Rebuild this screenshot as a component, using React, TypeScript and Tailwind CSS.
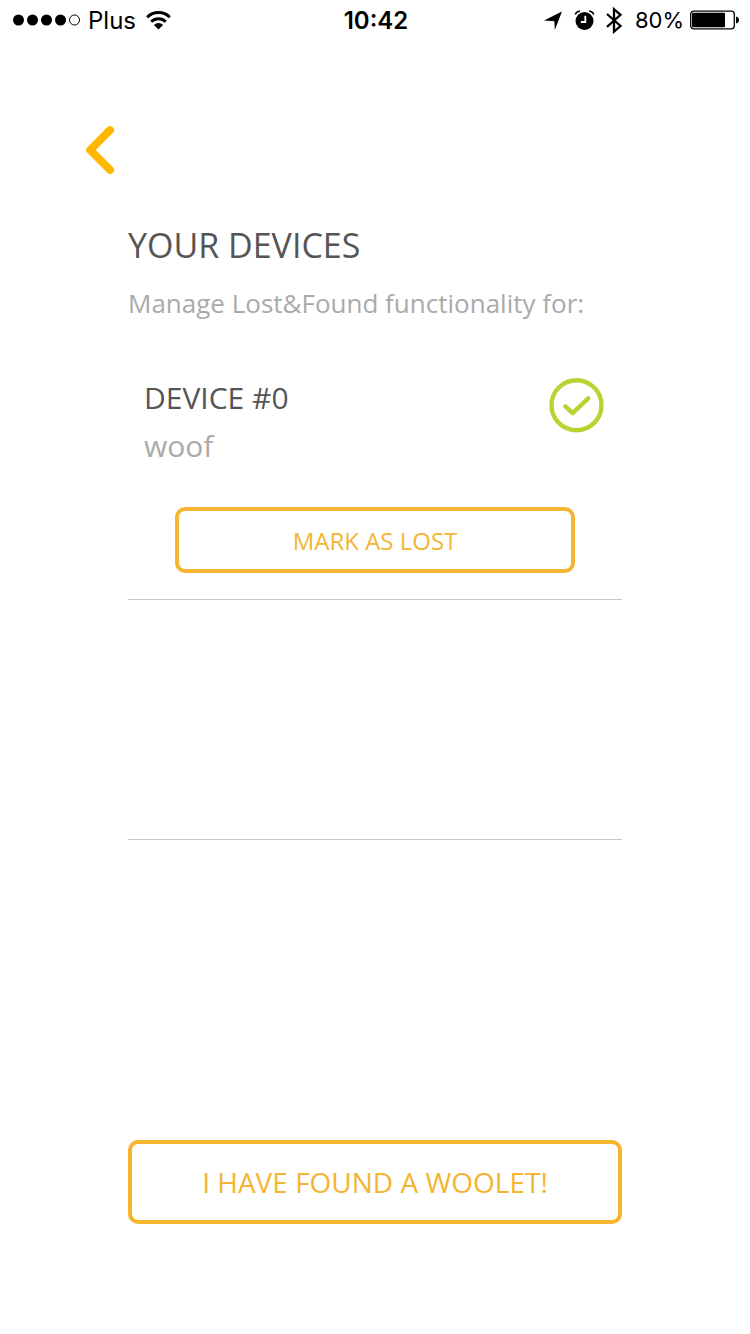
import { useState } from 'react';

const SIGNAL = [5.5, 19.5, 33.5, 47.5];
const DEVICES = [{ id: 0, name: 'woof' }];

function StatusBar() {
  return (
    <div className="grid grid-cols-[1fr_auto_1fr] items-center h-10 pl-[13px] pr-[11px] font-['Inter',sans-serif] text-2xl text-black">
      <div className="flex items-center">
        <svg width="68" height="12" viewBox="0 0 68 12" aria-label="Signal">
          {SIGNAL.map(cx => <circle key={cx} cx={cx} cy="6" r="5.5" />)}
          <circle cx="61.5" cy="6" r="5" fill="none" stroke="#000" />
        </svg>
        <span className="ml-[7px] pt-0.5">Plus</span>
        <svg className="ml-2.5" width="25" height="20" viewBox="0 0 25 20" fill="none" stroke="#000" strokeWidth="3" aria-label="Wi-Fi">
          <path d="M1.2 7.2a16 16 0 0 1 22.6 0" />
          <path d="M5.2 11.8a10.4 10.4 0 0 1 14.6 0" />
          <path d="M12.5 19.4 7.9 15a6.5 6.5 0 0 1 9.2 0z" fill="#000" stroke="none" />
        </svg>
      </div>

      <span className="pt-0.5 font-semibold">10:42</span>

      <div className="flex items-center justify-end">
        <svg width="18" height="20" viewBox="0 0 18 20" aria-label="Location">
          <path d="M18 1.6 10.8 20 10.4 11.2 0 10.6z" />
        </svg>
        <svg className="ml-3" width="21" height="20" viewBox="0 0 21 20" aria-label="Alarm">
          <circle cx="10.5" cy="11" r="9" />
          <path d="M1.2 4.6Q2.3 1.6 6 1.1M19.8 4.6Q18.7 1.6 15 1.1" fill="none" stroke="#000" strokeWidth="1.5" />
          <path d="M11.3 5.8v6.2H6.8" fill="none" stroke="#fff" strokeWidth="1.8" />
        </svg>
        <svg className="ml-2.5" width="18" height="28" viewBox="0 0 18 28" fill="none" stroke="#000" strokeWidth="2.3" aria-label="Bluetooth">
          <path d="M2 8 15.5 20 9 25.6V3.2L15.5 8.8 2 20.8" />
        </svg>
        <span className="ml-3 pt-0.5 text-[22px]">80%</span>
        <svg className="ml-1.5" width="49" height="20" viewBox="0 0 49 20" aria-label="Battery">
          <rect x="0.7" y="1.2" width="43.6" height="17.6" rx="3" fill="none" stroke="#000" strokeWidth="1.3" />
          <rect x="2" y="2.8" width="33" height="14.4" rx="1" />
          <path d="M46 6.5q3 .6 3 3.5t-3 3.5z" />
        </svg>
      </div>
    </div>
  );
}

export default function App() {
  const [lost, setLost] = useState<number[]>([]);

  const toggleLost = (id: number) => {
    setLost(prev => (prev.includes(id) ? prev.filter(x => x !== id) : [...prev, id]));
  };

  return (
    <div className="min-h-screen flex flex-col bg-white font-['Open_Sans',sans-serif]">
      <StatusBar />

      <header className="px-[86px] pt-[86px]">
        <button aria-label="Back" className="block">
          <svg width="29" height="48" viewBox="0 0 29 48" fill="none" stroke="#ffb800" strokeWidth="8" strokeLinecap="round" strokeLinejoin="round">
            <path d="M24 4.2 4.2 24 24 43.8" />
          </svg>
        </button>
      </header>

      <main className="flex-1 flex flex-col px-32 pt-[51px] pb-[110px]">
        <h1 className="text-[34px] leading-10 text-[#555]">YOUR DEVICES</h1>
        <p className="mt-5 text-[26px] leading-9 text-[#aaa]">Manage Lost&amp;Found functionality for:</p>

        <ul className="mt-[39px]">
          {DEVICES.map(d => (
            <li key={d.id} className="min-h-60 pt-3.5 pb-[26px] border-b border-[#c8c7cc]">
              <div className="flex items-start justify-between pl-4 pr-[17px]">
                <div className="text-3xl leading-[48px]">
                  <h2 className="text-[#555]">DEVICE #{d.id}</h2>
                  <p className="text-[#aaa]">{d.name}</p>
                </div>
                {!lost.includes(d.id) && (
                  <svg className="mt-[3px]" width="56" height="56" viewBox="0 0 56 56" fill="none" stroke="#b8d432" strokeWidth="4.4" aria-label="Connected">
                    <circle cx="27.5" cy="28.2" r="25" />
                    <path d="m16.4 29.4 7.2 6.8L39.2 21.4" strokeLinecap="round" strokeLinejoin="round" />
                  </svg>
                )}
              </div>
              <div className="px-[47px] pt-[37px]">
                <button onClick={() => toggleLost(d.id)} className="w-full h-[66px] pt-0.5 rounded-[10px] border-4 border-[#f3b532] text-2xl text-[#f3b532]">
                  {lost.includes(d.id) ? 'MARK AS FOUND' : 'MARK AS LOST'}
                </button>
              </div>
            </li>
          ))}
          {/* Empty slot */}
          <li className="h-60 border-b border-[#c8c7cc]" />
        </ul>

        <button className="mt-auto w-full h-[84px] rounded-[10px] border-4 border-[#f6b52c] text-[28px] text-[#f3b532]">
          I HAVE FOUND A WOOLET!
        </button>
      </main>
    </div>
  );
}
